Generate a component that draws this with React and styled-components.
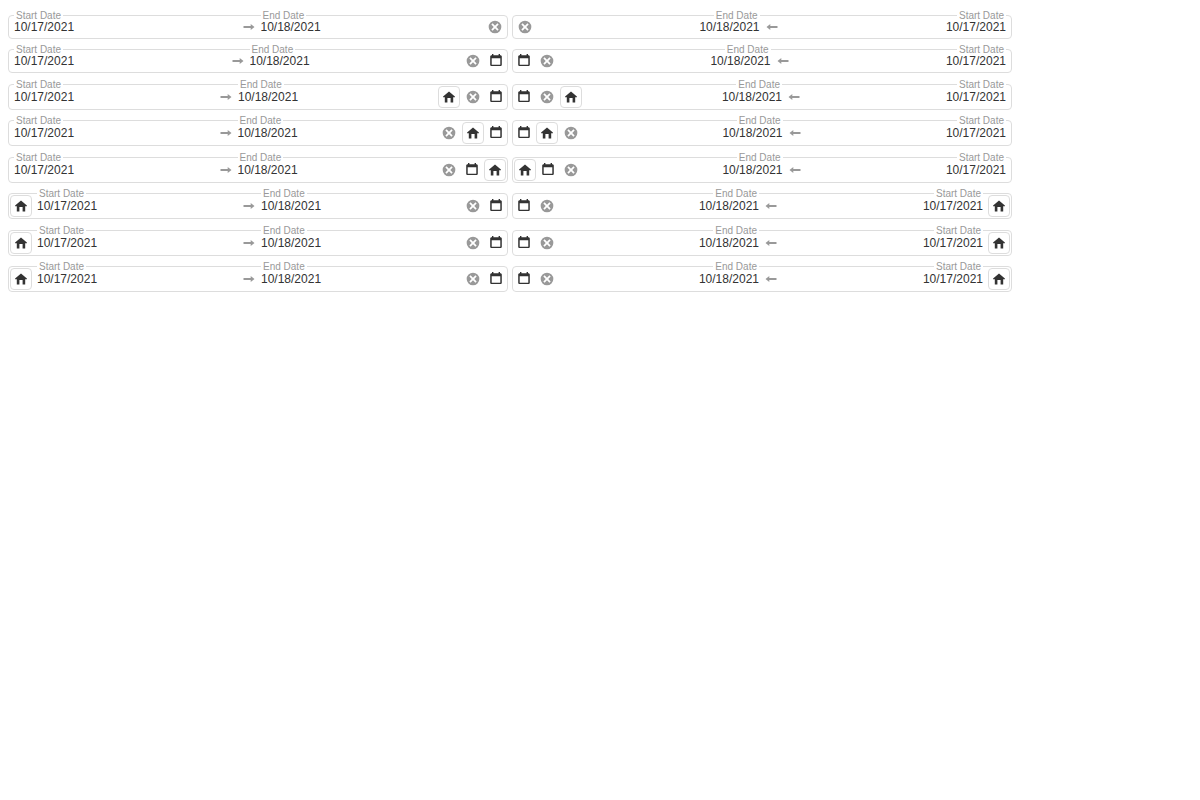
import React, { useId, useState } from "react";
import styled, { createGlobalStyle } from "styled-components";

const GlobalStyle = createGlobalStyle`
  body {
    margin: 0;
    background: #fff;
    color: #333;
    font: 12px "Liberation Sans", Arial, sans-serif;
  }
`;

const Page = styled.main`
  padding: 15px 8px;
`;

const Row = styled.div`
  display: grid;
  grid-template-columns: repeat(2, minmax(0, 500px));
  gap: 4px;
  margin-bottom: 10px;

  &:nth-child(odd):not(:first-child) {
    margin-top: 11px;
  }
`;

const Box = styled.div`
  display: flex;
  align-items: center;
  border: 1px solid #ddd;
  border-radius: 4px;
`;

const Field = styled.div`
  position: relative;
  flex: 1 1 0;
  min-width: 0;
  align-self: stretch;
  display: flex;
`;

const FieldLabel = styled.label`
  position: absolute;
  top: -6px;
  inset-inline-start: 5px;
  padding: 0 2px;
  background: #fff;
  color: #999;
  font-size: 10px;
  line-height: 12px;
  white-space: nowrap;
  pointer-events: none;
`;

const TextInput = styled.input`
  width: 100%;
  min-width: 0;
  min-height: 22px;
  box-sizing: border-box;
  padding: 0 5px;
  border: 0;
  outline: 0;
  position: relative;
  background: transparent;
  color: inherit;
  font: inherit;
`;

const Separator = styled.span`
  flex: none;
  box-sizing: border-box;
  width: 19px;
  padding-inline-end: 1px;
  display: flex;
  justify-content: flex-end;
  color: #999;

  [dir="rtl"] & svg {
    transform: scaleX(-1);
  }
`;

const Buttons = styled.div`
  flex: none;
  display: flex;
  align-items: center;
`;

const IconButton = styled.button`
  display: flex;
  align-items: center;
  justify-content: center;
  box-sizing: border-box;
  width: ${(p) => p.$width}px;
  height: 22px;
  padding: 0;
  border: 0;
  background: transparent;
  color: ${(p) => p.$color || "#333"};
  cursor: pointer;
`;

const OutlinedButton = styled(IconButton)`
  margin: 1px;
  border: 1px solid #ddd;
  border-radius: 4px;
  background: #fff;

  ${Buttons}:last-child > &:first-child {
    margin-inline-start: 0;
  }
  ${Buttons}:first-child > &:last-child {
    margin-inline-end: 0;
  }
`;

const ArrowIcon = () => (
  <svg width="12" height="8" viewBox="0 0 12 8" fill="currentColor" aria-hidden="true">
    <path d="M0.5 3.100H7.700V0.900L11.500 4L7.700 7.100V4.900H0.500z" />
  </svg>
);

const ClearIcon = () => (
  <svg width="16" height="16" viewBox="0 0 24 24" fill="currentColor" aria-hidden="true">
    <path d="M12 2.500a9.500 9.500 0 1 0 0 19 9.500 9.500 0 0 0 0-19zm5.500 13.100L15.600 17.500 12 13.900 8.400 17.500 6.500 15.600 10.100 12 6.500 8.400 8.400 6.500 12 10.100 15.600 6.500 17.500 8.400 13.900 12z" />
  </svg>
);

const CalendarIcon = () => (
  <svg width="12" height="14" viewBox="0 0 12 14" fill="currentColor" aria-hidden="true">
    <path d="M10.400 1.200H10V0.100H8.600v1.100H3.400V0.100H2v1.100H1.600C.8 1.200.2 1.800.2 2.600v8.100c0 .8.6 1.400 1.400 1.400h8.800c.8 0 1.400-.6 1.400-1.400V2.600c0-.8-.6-1.400-1.400-1.400zm-.1 9.500H1.700V4.200h8.600z" />
  </svg>
);

const HomeIcon = () => (
  <svg width="14" height="14" viewBox="0 0 14 14" fill="currentColor" aria-hidden="true">
    <path d="M7 1.600L12.900 6.500v.8h-1.700v5.100H8.600V8.100H5.400v4.300H2.800V7.300H1.100v-.8z" />
  </svg>
);

const buttonKinds = {
  clear: () => (
    <IconButton type="button" aria-label="Clear" $width={24} $color="#999">
      <ClearIcon />
    </IconButton>
  ),
  calendar: () => (
    <IconButton type="button" aria-label="Select" $width={22}>
      <CalendarIcon />
    </IconButton>
  ),
  home: () => (
    <OutlinedButton type="button" aria-label="Home" $width={22}>
      <HomeIcon />
    </OutlinedButton>
  ),
};

function ButtonGroup({ names }) {
  return (
    <Buttons>
      {names.map((name) => {
        const Kind = buttonKinds[name];
        return <Kind key={name} />;
      })}
    </Buttons>
  );
}

function DateField({ label, initial }) {
  const id = useId();
  const [value, setValue] = useState(initial);
  return (
    <Field>
      <FieldLabel htmlFor={id}>{label}</FieldLabel>
      <TextInput id={id} value={value} onChange={(e) => setValue(e.target.value)} />
    </Field>
  );
}

function DateRangeBox({ dir, before, after }) {
  return (
    <Box dir={dir}>
      {before && <ButtonGroup names={before} />}
      <DateField label="Start Date" initial="10/17/2021" />
      <Separator>
        <ArrowIcon />
      </Separator>
      <DateField label="End Date" initial="10/18/2021" />
      <ButtonGroup names={after} />
    </Box>
  );
}

const layouts = [
  { after: ["clear"] },
  { after: ["clear", "calendar"] },
  { after: ["home", "clear", "calendar"] },
  { after: ["clear", "home", "calendar"] },
  { after: ["clear", "calendar", "home"] },
  { before: ["home"], after: ["clear", "calendar"] },
  { before: ["home"], after: ["clear", "calendar"] },
  { before: ["home"], after: ["clear", "calendar"] },
];

export default function App() {
  return (
    <>
      <GlobalStyle />
      <Page>
        {layouts.map((layout, i) => (
          <Row key={i}>
            <DateRangeBox dir="ltr" {...layout} />
            <DateRangeBox dir="rtl" {...layout} />
          </Row>
        ))}
      </Page>
    </>
  );
}
